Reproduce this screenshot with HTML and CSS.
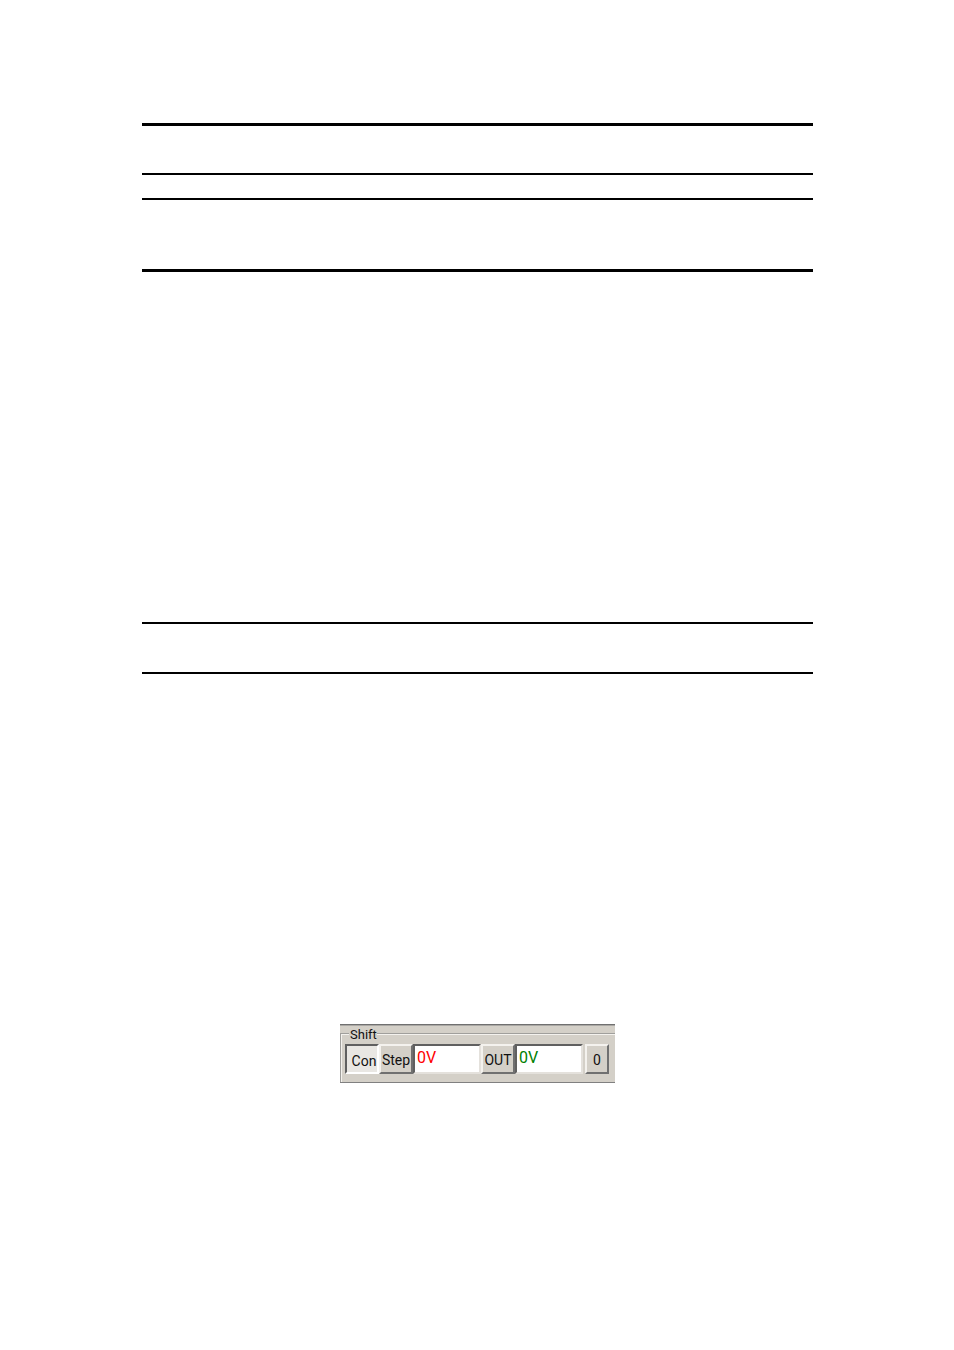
FILE: index.html
```html
<!DOCTYPE html>
<html lang="en">
<head>
<meta charset="utf-8">
<title>Shift</title>
<link rel="stylesheet" href="styles.css">
</head>
<body>
<main class="page">
	<section class="summary">
		<div class="summary-head"></div>
		<div class="summary-row"></div>
		<div class="summary-body"></div>
	</section>
	<section class="band"></section>
	<form class="panel">
		<fieldset class="shift">
			<legend>Shift</legend>
			<div class="controls">
				<button type="button" class="btn pressed" aria-pressed="true">Con</button>
				<button type="button" class="btn">Step</button>
				<input type="text" class="field step-value" aria-label="Step" value="0V">
				<button type="button" class="btn">OUT</button>
				<input type="text" class="field out-value" aria-label="OUT" value="0V">
				<button type="button" class="btn zero">0</button>
			</div>
		</fieldset>
	</form>
</main>
</body>
</html>
```
FILE: styles.css
```css
* {
	box-sizing: border-box;
}

body {
	margin: 0;
	background: #fff;
	color: #111;
	font-family: Roboto, "Liberation Sans", sans-serif;
	font-size: 13px;
}

.page {
	margin: 0 141px 0 142px;
	padding: 123px 0 267px;
}

/* ruled sections */
.summary {
	border-top: 3px solid #000;
	border-bottom: 3px solid #000;
}

.summary-head {
	height: 47px;
}

.summary-row {
	height: 27px;
	border-top: 2px solid #000;
	border-bottom: 2px solid #000;
}

.summary-body {
	height: 69px;
}

.band {
	height: 52px;
	margin-top: 350px;
	border-top: 2px solid #000;
	border-bottom: 2px solid #000;
}

/* shift toolbar */
.panel {
	width: 275px;
	margin: 350px auto 0;
	background: #d4d0c8;
	border-top: 1px solid #707070;
	border-bottom: 1px solid #808080;
	box-shadow: inset 0 1px #aaa8a4;
}

.shift {
	min-width: 0;
	margin: 0;
	padding: 0 0 8px 3px;
	border: 2px groove #f4f2ee;
	border-right: 0;
	border-bottom: 0;
}

.shift legend {
	height: 18px;
	margin-left: 4px;
	padding: 0 0 0 1px;
	line-height: 20px;
}

.controls {
	display: flex;
	height: 31px;
	padding-top: 1px;
}

.btn {
	flex: 0 0 34px;
	padding: 1px 0 0;
	color: #111;
	background: #d4d0c8;
	border: 2px solid;
	border-color: #f4f2ee #707070 #707070 #f4f2ee;
	font: inherit;
	font-size: 14px;
}

.pressed {
	padding: 4px 0 0 4px;
	background: #e9e7e3;
	border-color: #606060 #fff #fff #606060;
}

.field {
	flex: 0 0 68px;
	min-width: 0;
	padding: 0 0 4px 2px;
	background: #fff;
	border: 2px solid;
	border-color: #606060 #e4e1dc #e4e1dc #606060;
	border-radius: 0;
	font: inherit;
	font-size: 16px;
}

.step-value {
	color: #f00;
}

.out-value {
	color: #008000;
}

.zero {
	flex-basis: 24px;
	margin-left: 2px;
}
```
